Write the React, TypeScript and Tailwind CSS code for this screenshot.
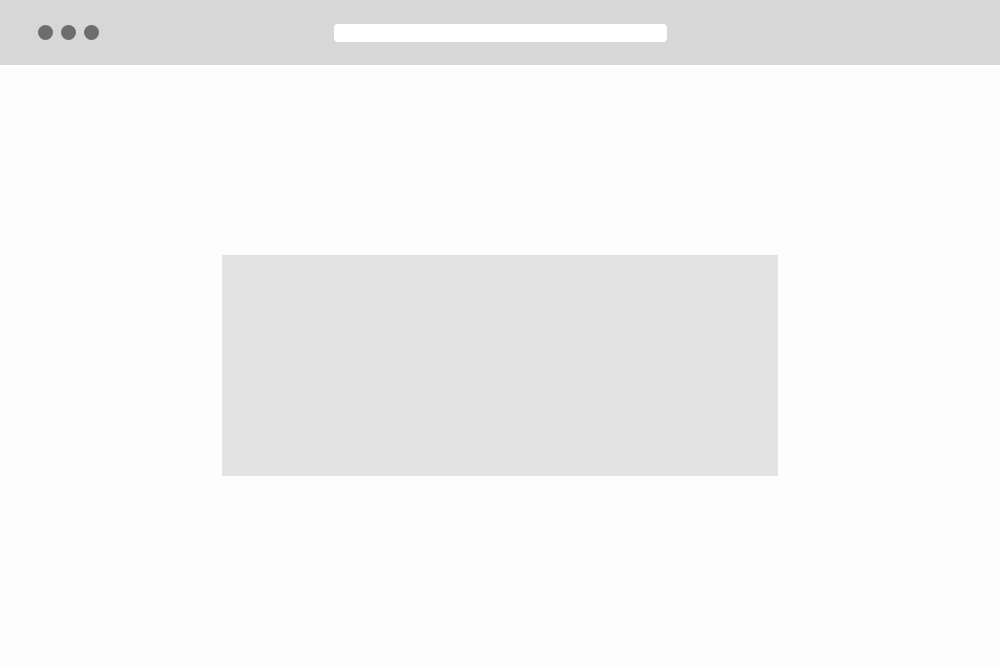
import React from 'react';

export default function App() {
  return (
    <div className="min-h-screen h-[666px] flex flex-col bg-[#fdfdfd] font-['Liberation_Sans',sans-serif]">
      {/* Browser chrome */}
      <header className="h-[65px] shrink-0 bg-[#d7d7d7] grid grid-cols-[1fr_333px_1fr] items-center">
        <div className="flex items-center gap-[8px] pl-[38px]">
          <span className="w-[15px] h-[15px] rounded-full bg-[#6d6d6d]" />
          <span className="w-[15px] h-[15px] rounded-full bg-[#6d6d6d]" />
          <span className="w-[15px] h-[15px] rounded-full bg-[#6d6d6d]" />
        </div>
        <div className="h-[18px] rounded-[4px] bg-white" />
        <div />
      </header>

      {/* Page body */}
      <main className="flex-1 flex items-center justify-center">
        <div className="w-[556px] h-[221px] bg-[#e3e3e3]" />
      </main>
    </div>
  );
}
